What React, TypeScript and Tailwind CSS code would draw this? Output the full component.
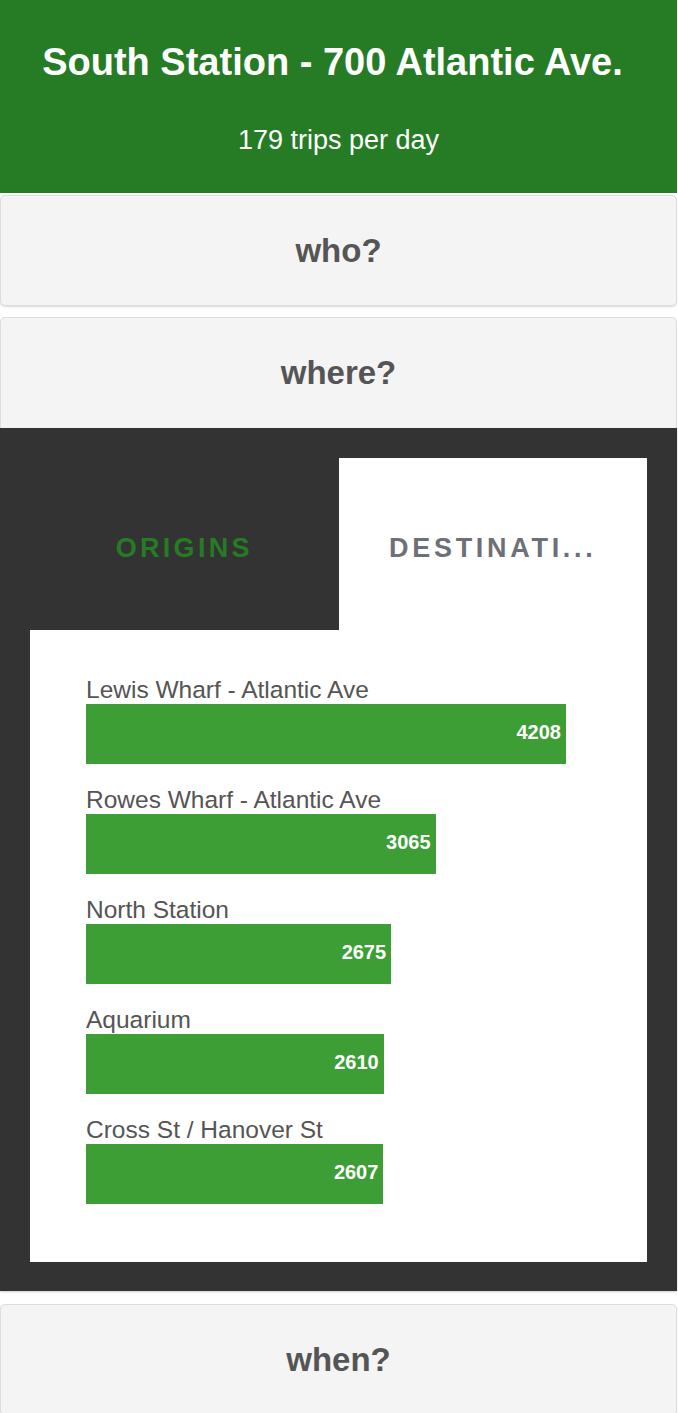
import React from 'react';

const stations = [
  { name: 'Lewis Wharf - Atlantic Ave', trips: 4208 },
  { name: 'Rowes Wharf - Atlantic Ave', trips: 3065 },
  { name: 'North Station', trips: 2675 },
  { name: 'Aquarium', trips: 2610 },
  { name: 'Cross St / Hanover St', trips: 2607 },
];

const maxWidth = 480;

function SectionHeader({ label, bottomRounded = true }: { label: string; bottomRounded?: boolean }) {
  return (
    <div
      className={
        'flex h-[111px] items-center justify-center border border-[#dddddd] bg-[#f4f4f4] ' +
        (bottomRounded ? 'rounded-[5px] shadow-[0_1px_2px_rgba(0,0,0,0.15)]' : 'rounded-t-[5px] border-b-0')
      }
    >
      <span className="text-[33px] font-bold text-[#555555]">{label}</span>
    </div>
  );
}

export default function App() {
  const max = Math.max(...stations.map((s) => s.trips));

  return (
    <div className="w-[677px] bg-white font-['Liberation_Sans',Arial,sans-serif]">
      {/* station header */}
      <div className="flex h-[193px] flex-col items-center bg-[#267b25] text-white">
        <h1 className="pt-[40px] pr-[12px] text-[38px] font-bold leading-[44px]">South Station - 700 Atlantic Ave.</h1>
        <p className="mt-[40px] text-[27px] leading-[32px]">179 trips per day</p>
      </div>

      <div className="mt-[2px]">
        <SectionHeader label="who?" />
      </div>

      <div className="mt-[11px]">
        <SectionHeader label="where?" bottomRounded={false} />
        <div className="bg-[#333333] px-[30px] pt-[30px] pb-[29px] shadow-[0_1px_2px_rgba(0,0,0,0.2)]">
          <div className="grid h-[172px] grid-cols-2">
            <div className="flex items-center justify-center pt-2">
              <span className="text-[27px] font-bold tracking-[3.3px] text-[#267b25]">ORIGINS</span>
            </div>
            <div className="flex items-center justify-center bg-white pt-2">
              <span className="text-[27px] font-bold tracking-[3.7px] text-[#6d7076]">DESTINATI...</span>
            </div>
          </div>

          <div className="flex flex-col gap-[22px] bg-white pt-[46px] pb-[58px] pl-[56px]">
            {stations.map((s) => (
              <div key={s.name}>
                <div className="text-[24.5px] leading-[28px] text-[#555555]">{s.name}</div>
                <div
                  className="flex h-[60px] items-center justify-end bg-[#3d9e36] pr-[5px] pb-1"
                  style={{ width: `${(s.trips / max) * maxWidth}px` }}
                >
                  <span className="text-[20px] font-bold text-white">{s.trips}</span>
                </div>
              </div>
            ))}
          </div>
        </div>
      </div>

      <div className="mt-[13px]">
        <SectionHeader label="when?" />
      </div>
    </div>
  );
}
